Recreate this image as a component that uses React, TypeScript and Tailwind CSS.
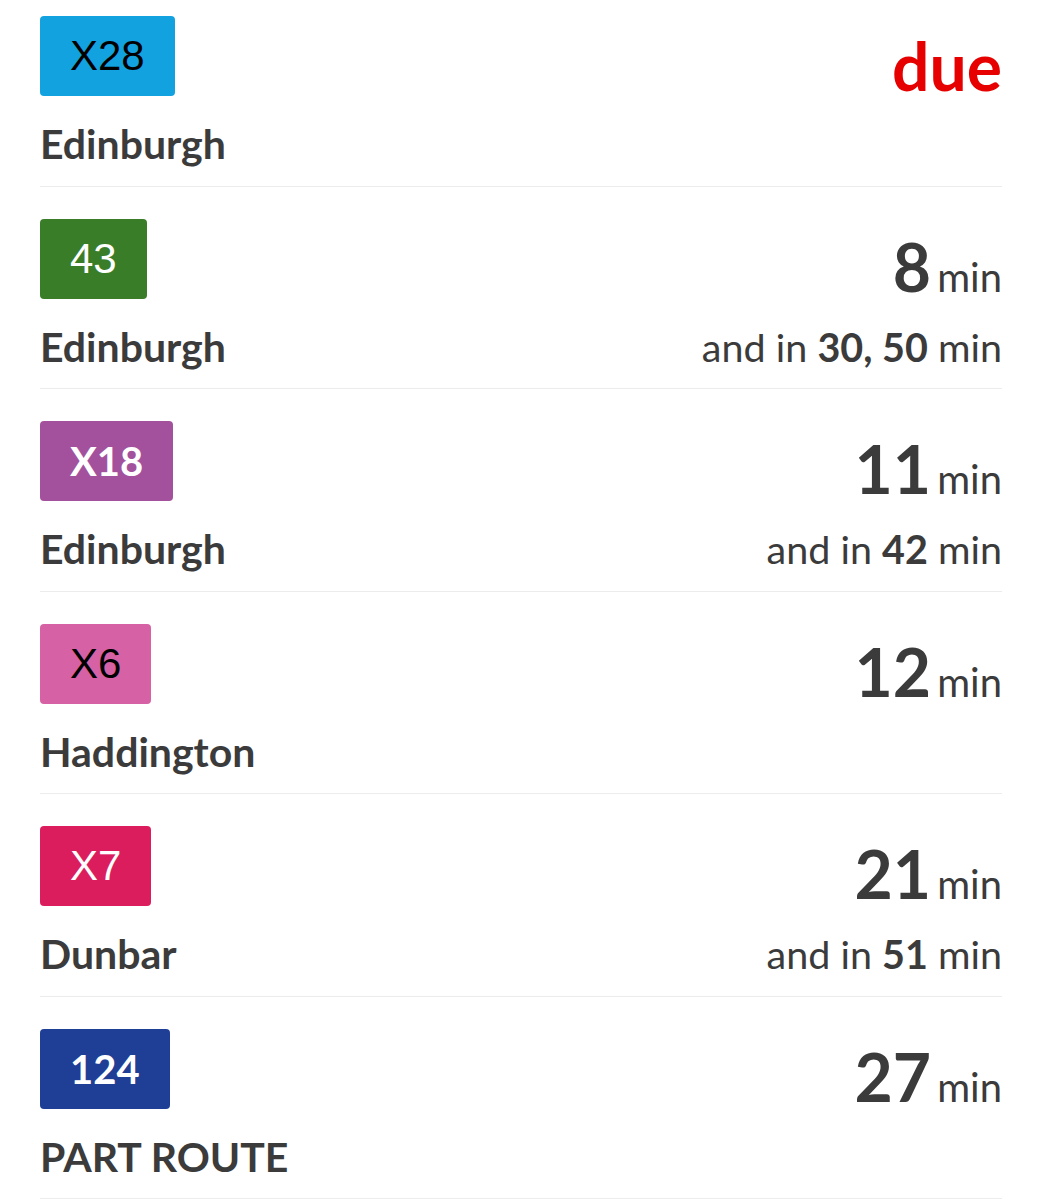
const departures = [
  { route: "X28", bg: "bg-[#12a2df]", fg: "text-black", lato: false, dest: "Edinburgh", due: true },
  { route: "43", bg: "bg-[#3a7d28]", fg: "text-white", lato: false, dest: "Edinburgh", mins: "8", more: "30, 50" },
  { route: "X18", bg: "bg-[#a3519d]", fg: "text-white", lato: true, dest: "Edinburgh", mins: "11", more: "42" },
  { route: "X6", bg: "bg-[#d761a5]", fg: "text-black", lato: false, dest: "Haddington", mins: "12" },
  { route: "X7", bg: "bg-[#db1d5d]", fg: "text-white", lato: false, dest: "Dunbar", mins: "21", more: "51" },
  { route: "124", bg: "bg-[#1f3e96]", fg: "text-white", lato: true, dest: "PART ROUTE", mins: "27" },
]

export default function App() {
  return (
    <div className="min-h-[1200px] bg-white px-10 font-['Lato',sans-serif] text-[#3b3b3b]">
      {departures.map((d, i) => (
        <div
          key={i}
          className={`flex justify-between border-b border-[#ececec] pb-[17.5px] ${i === 0 ? "pt-4" : "pt-8"}`}
        >
          <div className="flex flex-col items-start">
            <div
              className={`flex h-20 items-center rounded-[4px] px-[30px] leading-none ${d.bg} ${d.fg} ${
                d.lato
                  ? "font-['Lato',sans-serif] text-[40px] font-bold"
                  : "font-['Liberation_Sans',Arial,sans-serif] text-[42px] font-normal"
              }`}
            >
              {d.route}
            </div>
            <div className="mt-6 text-[41px] font-bold leading-[48px]">{d.dest}</div>
          </div>
          <div className="flex flex-col items-end">
            <div className="flex h-20 items-end">
              {d.due ? (
                <div className="mb-[-3px] text-[66px] font-bold leading-[66px] text-[#e60000]">due</div>
              ) : (
                <div className="mb-[-11px] whitespace-nowrap text-[66px] leading-[66px]">
                  <span className="mr-[-4px] font-bold">{d.mins}</span>
                  <span className="text-[40px]"> min</span>
                </div>
              )}
            </div>
            {d.more && (
              <div className="mt-6 whitespace-nowrap text-[39.5px] leading-[48px]">
                and in <span className="font-bold">{d.more}</span> min
              </div>
            )}
          </div>
        </div>
      ))}
    </div>
  )
}
